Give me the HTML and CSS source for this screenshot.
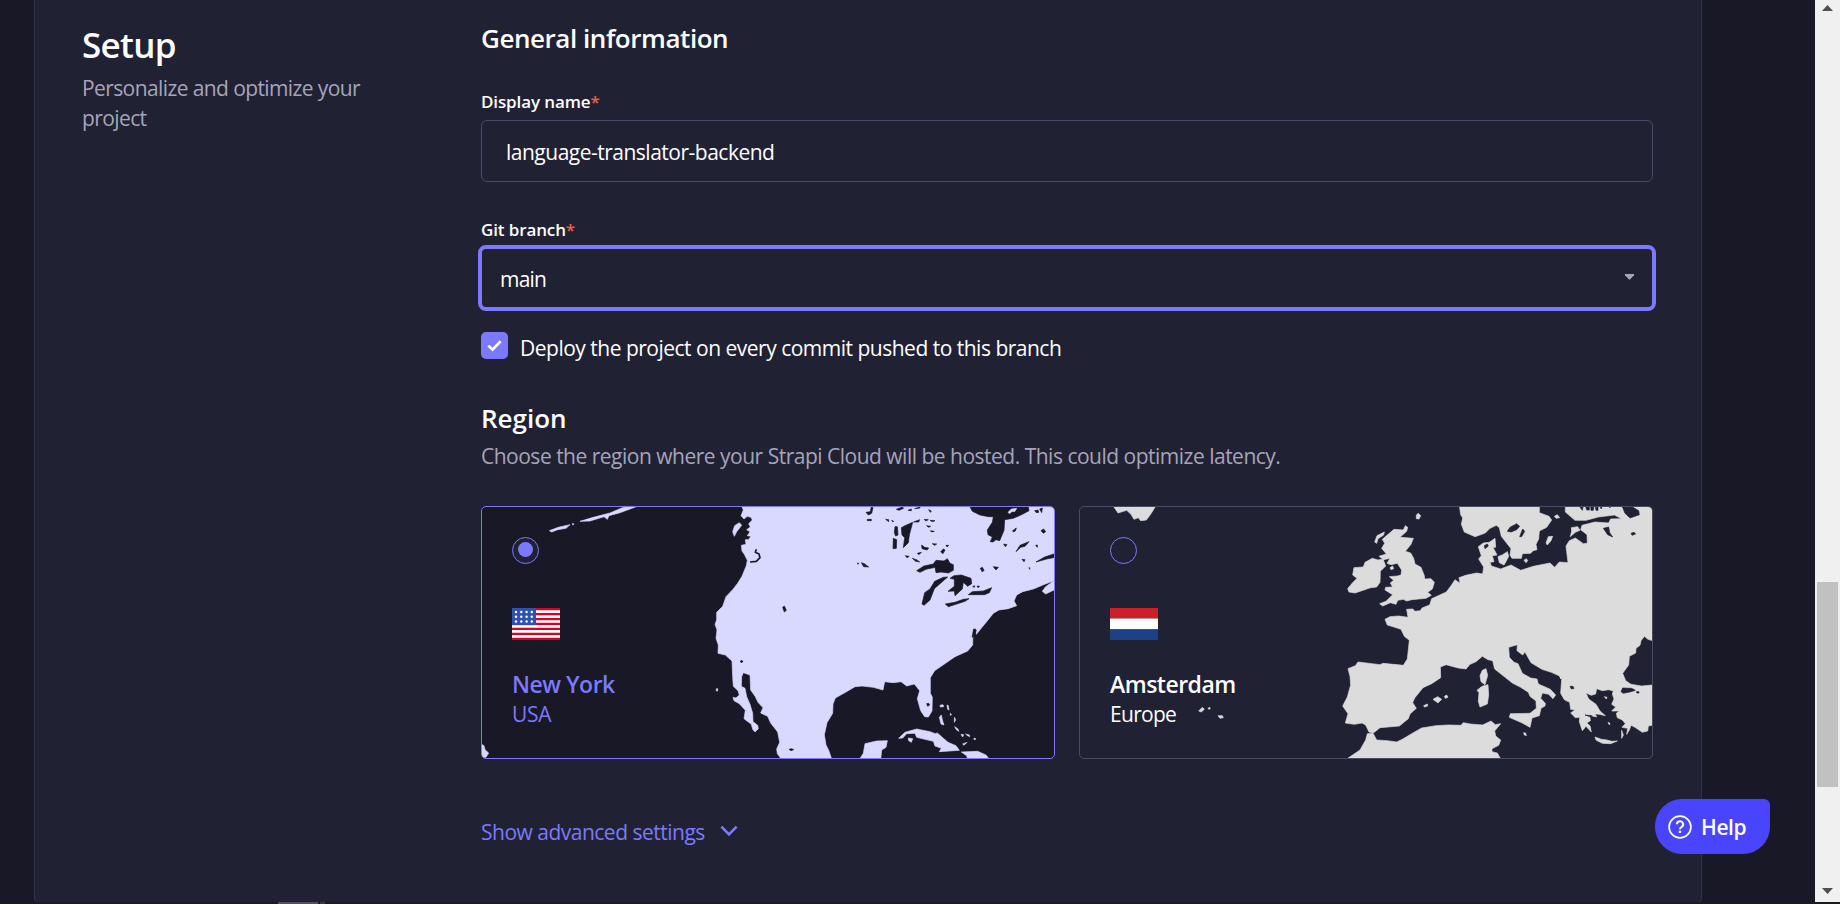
FILE: index.html
```html
<!DOCTYPE html>
<html lang="en">
<head>
<meta charset="utf-8">
<title>Setup</title>
<link rel="stylesheet" href="styles.css">
</head>
<body>
<div class="page">
  <main class="panel">
    <aside class="intro">
      <h1 class="intro-title">Setup</h1>
      <p class="intro-text">Personalize and optimize your project</p>
    </aside>
    <section class="form">
      <h2 class="heading heading-general">General information</h2>
      <label class="label label-name">Display name<span class="req">*</span></label>
      <div class="input"><span class="input-text">language-translator-backend</span></div>
      <label class="label label-branch">Git branch<span class="req">*</span></label>
      <div class="select">
        <span class="select-text">main</span>
        <svg class="caret" width="9" height="6" viewBox="0 0 9 6"><path d="M0 0h9v1.2L5.2 5.3a1 1 0 0 1-1.4 0L0 1.2z" fill="#a5a5ba"/></svg>
      </div>
      <div class="check-row">
        <span class="checkbox"><svg width="27" height="27" viewBox="0 0 27 27"><path d="M7.3 13.6l4.2 4.1 8.2-8.5" fill="none" stroke="#fff" stroke-width="2.7"/></svg></span>
        <span class="check-text">Deploy the project on every commit pushed to this branch</span>
      </div>
      <h2 class="heading heading-region">Region</h2>
      <p class="region-text">Choose the region where your Strapi Cloud will be hosted. This could optimize latency.</p>
      <div class="regions">
        <div class="region region-on">
          <svg class="map" viewBox="-654 36 1716 753" preserveAspectRatio="none">
            <g class="land-us">
              <path d="M124 30L130 45 123 62 132 72 142 64 153 67 157 75 146 86 151 96 140 104 150 110 142 122 153 124 145 134 136 134 138 148 124 151 126 168 133 178 142 196 139 212 126 244 112 266 98 284 78 305 68 334 50 352 50 375 45 388 51 405 48 430 55 450 54 475 76 480 96 498 98 545 100 574 114 587 118 600 108 609 99 607 102 617 118 626 136 646 132 671 154 688 158 703 165 711 175 701 173 691 159 680 158 655 150 628 140 605 135 580 124 574 125 545 130 533 150 540 152 585 166 605 174 622 189 638 182 654 203 664 212 684 233 711 239 742 230 762 232 776 246 795 396 795 386 766 378 750 373 719 381 683 398 655 399 627 406 609 438 591 465 575 486 573 520 577 549 585 554 560 580 563 603 560 620 573 643 567 659 587 652 611 662 647 674 665 685 666 696 648 697 607 691 595 691 548 704 527 739 503 765 485 803 468 818 450 819 403 827 400 829 418 846 397 860 380 880 355 897 345 925 341 950 332 942 318 950 300 968 290 1000 282 1034 268 1062 257 1036 276 1027 289 1037 297 1070 281V30Z"/>
              <path d="M118 83L104 92 98 110 103 124 110 110 125 91ZM-452 107L-425 97 -390 89 -402 100 -427 104 -445 111ZM-360 79L-320 67 -270 54 -235 39 -205 32 -191 35 -240 53 -273 62 -278 73 -288 65 -330 78ZM-383 86h4v3h-4ZM-660 745L-648 752 -645 764 -634 774 -642 787-660 790ZM477 795L490 775 495 746 530 738 562 737 558 757 545 765 542 795ZM596 730L615 712 650 702 690 710 706 716 712 714 744 742 768 752 778 766 718 770 724 760 705 753 700 739 650 727 645 715 620 716 608 729ZM625 729L638 731 634 742 626 737ZM784 771L833 769 858 780 870 795H804L800 782ZM718 667L724 660 727 675 732 690 723 687ZM720 631l9-2 2 6-10 1ZM741 630l4 2 2 13-4-2ZM763 667l4 7-4 8ZM764 695l9 6 4 8-8-5ZM783 718l8 1-3 7ZM797 717l11 3 1 5-8-4ZM788 747l13-5-9 9ZM822 729l6 3-6 2ZM751 655l4 4-4 2ZM49 581h4v7h-4Z"/>
            </g>
            <g class="sea-dark">
              <path d="M807 30L817 49 840 60 866 65 880 65 877 82 862 105 864 119 877 126 871 140 879 141 888 134 899 137 912 106 914 74 940 70 967 58 987 47 984 30ZM650 227L672 213 700 207 708 196 732 198 742 191 750 205 760 209 760 226 745 234 723 231 708 233 705 217 678 223 660 232ZM666 327L674 293 690 282 704 259 730 247 743 246 720 266 703 281 690 315 672 331ZM762 242L784 240 813 250 815 266 803 274 790 262 787 282 765 302 763 288 744 289 763 274 763 253 750 250ZM805 299L817 290 850 288 875 278 868 293 853 299ZM736 327L765 322 790 313 807 311 795 319 745 335ZM638 82L628 120 625 143 610 158 614 128 606 120 604 98 615 92ZM585 95h7l2 25-7 3-4-10ZM580 130l10 4-1 26-10 1ZM498 52l13-2 3-14 5 2-4 17-10 5ZM502 73h12v4h-12ZM589 43l18-7 4 4-14 6ZM644 41l16-5v3ZM624 46l10-4v5ZM686 44l8 4-3 4ZM557 73l9 1v6ZM575 76l6 3-2 2ZM641 81l18-7-3 7ZM673 73l12 1-8 4ZM690 76l15 1-8 3ZM680 92l12 2-7 3ZM691 107l12 2-8 2ZM665 150l9 7 12 2-5 6-15-4ZM697 146l13 1-6 4ZM738 151h8l-5 5ZM722 170l8-8 5 3-6 11ZM652 175l12-3-7 7ZM616 182l11 2-5 5ZM637 190l14 5 8 6-12-2ZM911 147l10 2-5 6ZM938 107l11-8-3 9-6 3ZM1023 107l8-5 6 8-7 5ZM948 170L960 151 987 140 975 154 962 157ZM1007 151l5-1v7ZM966 193l9 1-3 6ZM1008 201L1034 186 1070 174V186L1040 192ZM841 220l6-3 5 9-5 5ZM880 215l15 2-7 8ZM987 218h2v5ZM484 203l9 3 13 10-15-1ZM472 204l4 1-2 3ZM248 337l5-4 6 13-6 5ZM121 498l5-2 3 4-6 3ZM267 763l8-2 6 3-8 3ZM680 626l6-1 3 5-6 4ZM818 275l6-3-1 5ZM831 273l8 1-5 4ZM1004 47l10-2 2 7-7 1ZM1019 42l8-3-2 14ZM816 427L821 402 829 405 824 421Z"/>
              <path class="inlet" d="M169 163L166 172 177 177 180 188 169 199 150 201"/>
            </g>
            <path class="land-us" d="M924 52L934 42 950 40 945 49 935 50 929 56Z"/>
          </svg>
          <div class="region-body">
            <span class="radio radio-on"></span>
            <svg class="flag" width="48" height="32" viewBox="0 0 48 32">
              <path fill="#fff" d="M0 0h48v32H0z"/>
              <path fill="#d80027" d="M0 0h48v2.3H0zM0 5h48v2.3H0zM0 9.9h48v2.3H0zM0 14.8h48v2.3H0zM0 19.7h48v2.3H0zM0 24.7h48v2.3H0zM0 29.7h48V32H0z"/>
              <path fill="#2e52b2" d="M0 0h24v17.2H0z"/>
              <g fill="#fff"><circle cx="4" cy="4" r="1.2"/><circle cx="9.3" cy="4" r="1.2"/><circle cx="14.6" cy="4" r="1.2"/><circle cx="19.8" cy="4" r="1.2"/><circle cx="4" cy="8.8" r="1.2"/><circle cx="9.3" cy="8.8" r="1.2"/><circle cx="14.6" cy="8.8" r="1.2"/><circle cx="19.8" cy="8.8" r="1.2"/><circle cx="4" cy="13.5" r="1.2"/><circle cx="9.3" cy="13.5" r="1.2"/><circle cx="14.6" cy="13.5" r="1.2"/><circle cx="19.8" cy="13.5" r="1.2"/></g>
            </svg>
            <span class="city city-ny">New York</span>
            <span class="area area-usa">USA</span>
          </div>
        </div>
        <div class="region">
          <svg class="map" viewBox="-750 36 1716 753" preserveAspectRatio="none">
            <g class="land-eu">
              <path d="M970 30V438L954 433 943 424 933 437 930 451 918 460 917 474 898 484 896 510 878 535 887 557 903 568 935 573 970 570V690L955 693 953 708 937 712 915 697 903 691 898 705 890 718 893 700 876 697 886 686 877 675 862 668 859 655 868 648 845 648 857 636 845 628 852 612 847 597 850 588 836 584 817 587 800 581 797 597 784 601 768 594 776 612 798 628 810 648 826 662 808 658 795 657 800 666 779 661 781 677 770 684 780 692 784 711 768 694 757 707 748 680 749 667 736 668 722 654 735 645 722 643 719 622 703 614 692 595 695 553 689 543 664 532 636 523 603 503 585 471 578 480 561 467 562 449 536 457 538 487 552 502 564 506 577 535 602 549 621 552 625 567 661 583 677 600 669 611 656 598 637 594 632 610 646 625 645 633 633 640 628 662 606 669 600 697 575 683 538 667 541 656 600 655 619 640 618 618 600 604 595 592 572 577 547 564 494 522 488 497 474 494 457 484 438 500 420 508 408 522 385 519 348 509 331 516 332 548 305 566 279 578 254 609 248 623 259 640 240 657 235 671 208 693 150 698 130 714 117 711 107 690 96 684 73 688 46 684 54 656 38 633 52 606 62 570 60 544 54 521 76 512 84 501 150 509 159 505 220 511 232 492 238 436 223 424 213 403 192 396 172 390 165 373 180 365 205 363 234 367 230 343 248 342 255 349 271 347 276 339 299 330 305 311 349 291 364 271 375 254 390 265 387 248 407 241 440 234 458 237 461 216 446 192 454 182 445 155 460 144 478 142 495 130 497 157 489 157 501 180 487 182 492 200 480 202 484 213 512 222 543 210 572 226 610 214 660 204 674 217 688 201 714 203 708 153 718 137 736 129 760 146 772 145 771 119 752 104 756 91 795 81 836 84 842 72 875 71 853 60 805 66 768 76 735 76 706 51V30Z"/>
              <path d="M388 30L392 59 398 69 394 88 403 111 435 125 466 114 480 100 499 91 508 98 514 124 543 161 540 180 546 190 574 190 577 176 602 175 609 167 621 164 618 148 626 132 628 108 650 97 665 75 657 64 628 53V30ZM504 185L518 179 532 170 536 184 529 198 522 210 508 203ZM648 144L655 125 668 124 663 137 652 150ZM673 64l9-5 7 9-11 2ZM724 98l19-3 7 11-14 6-15 13 4-17ZM582 196l7-5 4 6-5 6ZM259 60l6-5 7 7-5 10-8-1Z"/>
              <path d="M192 103L220 105 226 92 233 97 230 109 210 127 250 130 243 148 226 169 242 174 251 190 255 207 273 217 283 242 284 252 303 251 313 262 307 282 293 292 304 301 288 310 245 314 230 318 220 313 203 316 198 328 181 323 158 333 149 326 168 319 188 299 165 285 167 277 188 276 181 264 191 256 178 245 202 243 213 240 215 225 202 205 183 209 171 205 180 190 161 194 147 184 169 177 155 160 164 145 157 133ZM72 218L100 216 105 202 127 190 144 195 159 192 167 213 151 229 150 262 140 276 122 278 75 294 57 291 53 281 67 264 81 250 68 240ZM134 141L141 122 163 111 161 120 144 131 140 145ZM180 218l8-5 3 8-8 3Z"/>
              <path d="M50 792L90 765 107 735 112 716 129 715 140 735 172 737 200 741 217 733 245 716 275 699 318 692 355 690 393 691 400 683 421 687 458 690 483 678 496 689 512 686 494 708 497 723 512 735 506 751 486 761 486 770 502 774 512 792ZM450 542L457 526 468 521 473 541 465 569 453 560ZM441 586L456 574 474 569 476 600 472 627 450 636 445 619 447 593ZM309 613L323 605 335 613 324 624ZM343 604l7-4 4 7-8 3ZM281 632l11-5 1 6-10 3ZM581 713l6 1 2 8-6-2ZM795 726L814 733 831 735 845 739 862 738 842 746 817 745 798 735ZM-651 32L-636 54 -610 46 -597 58 -588 73 -575 68 -568 77 -551 75 -537 56 -522 32ZM-394 648L-383 637 -377 643 -386 651ZM-366 640l5-3 2 4-5 2ZM-336 662l13 0 3 6-10 2Z"/>
              <path d="M722 574l9 3-2 5ZM688 541l7 1-3 10ZM875 706l5 14-5 10Z"/>
            </g>
            <g class="sea-eu">
              <path d="M532 109L540 97 560 86 569 94 560 104 543 111ZM569 125L578 102 584 109 575 125ZM875 30L885 55 900 69 928 59 926 47 909 37ZM747 32H760L757 46ZM766 30H778V45H770ZM782 32h10l-2 14h-7ZM796 32h8v14h-6ZM808 32h8l-2 10ZM832 32h12l-4 6ZM820 100L836 96 839 113 848 126 833 119ZM903 115l9-3 5 5-11 4ZM873 590L878 579 905 580 916 586 903 590 880 595ZM920 590h7v4h-7ZM463 152l9-5 3 6-10 8ZM720 574l9 0 3 6-8 2ZM820 607l9-3 2 5ZM765 660l20 2-2 4Z"/>
            </g>
            <path class="land-eu" d="M823 605l8 2-2 5ZM834 682l6 3-2 5ZM852 625l4 3-3 3Z"/>
          </svg>
          <div class="region-body">
            <span class="radio"></span>
            <svg class="flag" width="48" height="32" viewBox="0 0 48 32">
              <path fill="#cd1f2a" d="M0 0h48v10.5H0z"/><path fill="#fff" d="M0 10.5h48v11H0z"/><path fill="#1d4185" d="M0 21.3h48V32H0z"/>
            </svg>
            <span class="city city-ams">Amsterdam</span>
            <span class="area area-eu">Europe</span>
          </div>
        </div>
      </div>
      <div class="advanced">
        <span class="advanced-text">Show advanced settings</span>
        <svg class="chevron" width="18" height="12" viewBox="0 0 18 12"><path d="M1.4 1.7L9 9.3l7.6-7.6" fill="none" stroke="#7b79ff" stroke-width="2.6"/></svg>
      </div>
    </section>
  </main>
  <div class="scrollbar">
    <svg class="arrow-up" width="11" height="6" viewBox="0 0 11 6"><path d="M5.5 0L11 6H0z" fill="#505050"/></svg>
    <span class="thumb"></span>
    <svg class="arrow-down" width="11" height="6" viewBox="0 0 11 6"><path d="M0 0h11L5.5 6z" fill="#505050"/></svg>
  </div>
</div>
<div class="edge"><span class="edge-a"></span><span class="edge-b"></span></div>
<div class="help">
  <svg width="24" height="24" viewBox="0 0 24 24" fill="none" stroke="#fff" stroke-width="1.7"><circle cx="12" cy="12" r="10.9"/><path d="M8.9 9.3a3.1 3.1 0 1 1 4.6 2.7c-1 .6-1.5 1-1.5 2.2" stroke-width="2"/><circle cx="12" cy="16.8" r="1.3" fill="#fff" stroke="none"/></svg>
  <span class="help-text">Help</span>
</div>
</body>
</html>
```
FILE: styles.css
```css
* { box-sizing: border-box; }
body { margin: 0; width: 1840px; height: 904px; overflow: hidden; background: #181826; color: #fff; font-family: "Open Sans", "Noto Sans", sans-serif; font-size: 21px; line-height: 30px; letter-spacing: -0.5px; }
h1, h2, p { margin: 0; }
svg { display: block; }
.page { display: flex; justify-content: space-between; height: 902px; padding-left: 34px; overflow: hidden; }
.panel { display: flex; width: 1668px; height: 903px; padding-left: 47px; background: #212134; border: 1px solid #32324d; border-top: 0; border-radius: 0 0 5px 5px; }
.intro { width: 399px; padding-top: 23px; flex: none; }
.intro-title { font-size: 35px; font-weight: 600; line-height: 44px; letter-spacing: -0.7px; }
.intro-text { width: 300px; margin-top: 6px; color: #a5a5ba; letter-spacing: -0.6px; }
.form { width: 1172px; padding-top: 21px; display: flex; flex-direction: column; flex: none; }
.heading { font-size: 26px; font-weight: 600; line-height: 34px; }
.heading-general { letter-spacing: -0.45px; }
.label { font-size: 17px; font-weight: 600; line-height: 24px; letter-spacing: -0.12px; white-space: nowrap; }
.req { color: #ee5e52; }
.label-name { margin-top: 35px; }
.input { height: 62px; margin-top: 6px; padding: 2px 24px 0; display: flex; align-items: center; border: 1px solid #4a4a6a; border-radius: 6px; }
.label-branch { margin-top: 36px; }
.select { height: 66px; margin: 3px -3px 0; padding: 2px 18px 0 18px; display: flex; align-items: center; justify-content: space-between; border: 4px solid #7b79ff; border-radius: 8px; }
.select-text { letter-spacing: -0.8px; }
.caret { margin-top: -4px; }
.check-row { display: flex; gap: 12px; height: 31px; margin-top: 21px; white-space: nowrap; }
.checkbox { width: 27px; height: 27px; border-radius: 5px; background: #7b79ff; }
.check-text { margin-top: 1px; }
.heading-region { margin-top: 38px; letter-spacing: 0; }
.region-text { margin-top: 6px; color: #a5a5ba; white-space: nowrap; }
.regions { display: grid; grid-template-columns: 1fr 1fr; gap: 24px; margin-top: 35px; }
.region { position: relative; height: 253px; border: 1px solid #4a4a6a; border-radius: 5px; overflow: hidden; }
.region-on { background: #181826; border-color: #7b79ff; }
.map { position: absolute; inset: 0; width: 572px; height: 251px; stroke-linejoin: round; stroke-width: 2; }
.land-us { fill: #d9d8ff; stroke: #d9d8ff; }
.sea-dark { fill: #181826; stroke: #181826; }
.inlet { fill: none; stroke-width: 5; }
.land-eu { fill: #dcdcdc; stroke: #dcdcdc; }
.sea-eu { fill: #212134; stroke: #212134; }
.region-body { position: relative; display: flex; flex-direction: column; align-items: flex-start; padding: 30px; }
.radio { width: 27px; height: 27px; border: 1px solid #7b79ff; border-radius: 50%; background: #212134; }
.radio-on { padding: 4px 5px; }
.radio-on::before { content: ""; display: block; width: 15px; height: 15px; border-radius: 50%; background: #7b79ff; }
.flag { margin-top: 44px; }
.city { margin-top: 29px; font-size: 23px; font-weight: 600; }
.region-on .city, .region-on .area { color: #7b79ff; }
.area-usa { letter-spacing: -0.3px; }
.area-eu { letter-spacing: -0.7px; }
.advanced { display: flex; gap: 15px; margin-top: 58px; color: #7b79ff; white-space: nowrap; }
.chevron { margin-top: 8px; }
.scrollbar { width: 25px; height: 902px; display: flex; flex-direction: column; align-items: center; background: #f0f0f0; padding-top: 5px; }
.thumb { width: 21px; height: 205px; margin-top: 571px; background: #c1c1c1; }
.arrow-down { margin-top: 101px; }
.edge { display: flex; gap: 2px; height: 2px; padding-left: 278px; background: #1d1a1c; }
.edge-a { width: 40px; background: #555058; }
.edge-b { width: 5px; background: #3c3840; }
.help { position: absolute; left: 1655px; top: 799px; width: 115px; height: 55px; display: flex; align-items: center; gap: 9px; padding-left: 13px; background: #4945ff; border-radius: 27px 6px 27px 27px; }
.help-text { font-size: 21px; font-weight: 600; letter-spacing: -0.4px; }
```
